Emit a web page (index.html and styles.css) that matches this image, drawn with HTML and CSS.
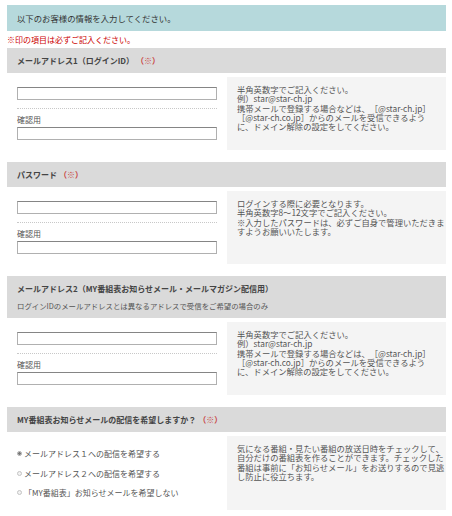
FILE: index.html
```html
<!DOCTYPE html>
<html lang="ja">
<head>
<meta charset="utf-8">
<title>お客様情報入力</title>
<link rel="stylesheet" href="styles.css">
</head>
<body>
<div class="page">
  <div class="lead">以下のお客様の情報を入力してください。</div>
  <div class="note">※印の項目は必ずご記入ください。</div>

  <section class="section">
    <div class="sec-head">メールアドレス1（ログインID）<span class="req">（※）</span></div>
    <div class="row">
      <div class="fields">
        <input class="text-input" type="text">
        <div class="field-sep"></div>
        <span class="confirm-label">確認用</span>
        <input class="text-input" type="text">
      </div>
      <div class="hint">
        <span class="ln">半角英数字でご記入ください。</span>
        <span class="ln">例）star@star-ch.jp</span>
        <span class="ln">携帯メールで登録する場合などは、［@star-ch.jp］</span>
        <span class="ln">［@star-ch.co.jp］からのメールを受信できるよう</span>
        <span class="ln">に、ドメイン解除の設定をしてください。</span>
      </div>
    </div>
  </section>

  <section class="section">
    <div class="sec-head">パスワード<span class="req">（※）</span></div>
    <div class="row">
      <div class="fields">
        <input class="text-input" type="password">
        <div class="field-sep"></div>
        <span class="confirm-label">確認用</span>
        <input class="text-input" type="password">
      </div>
      <div class="hint">
        <span class="ln">ログインする際に必要となります。</span>
        <span class="ln">半角英数字8～12文字でご記入ください。</span>
        <span class="ln">※入力したパスワードは、必ずご自身で管理いただきま</span>
        <span class="ln">すようお願いいたします。</span>
      </div>
    </div>
  </section>

  <section class="section">
    <div class="sec-head">メールアドレス2（MY番組表お知らせメール・メールマガジン配信用）
      <div class="sec-sub">ログインIDのメールアドレスとは異なるアドレスで受信をご希望の場合のみ</div>
    </div>
    <div class="row">
      <div class="fields">
        <input class="text-input" type="text">
        <div class="field-sep"></div>
        <span class="confirm-label">確認用</span>
        <input class="text-input" type="text">
      </div>
      <div class="hint">
        <span class="ln">半角英数字でご記入ください。</span>
        <span class="ln">例）star@star-ch.jp</span>
        <span class="ln">携帯メールで登録する場合などは、［@star-ch.jp］</span>
        <span class="ln">［@star-ch.co.jp］からのメールを受信できるよう</span>
        <span class="ln">に、ドメイン解除の設定をしてください。</span>
      </div>
    </div>
  </section>

  <section class="section">
    <div class="sec-head">MY番組表お知らせメールの配信を希望しますか？<span class="req">（※）</span></div>
    <div class="row">
      <div class="fields radios">
        <label class="radio-row"><input class="radio" type="radio" name="mail" checked>メールアドレス１への配信を希望する</label>
        <label class="radio-row"><input class="radio" type="radio" name="mail">メールアドレス２への配信を希望する</label>
        <label class="radio-row"><input class="radio" type="radio" name="mail">「MY番組表」お知らせメールを希望しない</label>
      </div>
      <div class="hint">
        <span class="ln">気になる番組・見たい番組の放送日時をチェックして、</span>
        <span class="ln">自分だけの番組表を作ることができます。チェックした</span>
        <span class="ln">番組は事前に「お知らせメール」をお送りするので見逃</span>
        <span class="ln">し防止に役立ちます。</span>
      </div>
    </div>
  </section>
</div>
</body>
</html>
```

FILE: styles.css
```css
html, body {
  margin: 0;
  padding: 0;
  background: #fff;
}

body {
  font-family: "Noto Sans CJK JP", "Noto Sans", sans-serif;
  color: #444;
  font-size: 8px;
  text-spacing-trim: space-all;
}

.page {
  padding: 5px 6px 0 7px;
}

.lead {
  background: #b6d9dc;
  height: 26px;
  line-height: 26px;
  padding-left: 10px;
  font-size: 8.4px;
  color: #333;
}

.note {
  height: 17px;
  line-height: 17px;
  color: #c00;
  font-size: 8px;
}

.section {
  margin-bottom: 12px;
}

.sec-head {
  background: #dadada;
  padding: 5px 10px;
  font-weight: bold;
  font-size: 8px;
  line-height: 15px;
  color: #444;
}

.req {
  color: #c9423f;
  margin-left: 2px;
}

.sec-sub {
  font-weight: normal;
  font-size: 7.4px;
  margin-top: 2px;
  line-height: 15px;
  color: #555;
}

.row {
  display: flex;
  align-items: stretch;
}

.fields {
  width: 220px;
  flex: none;
  box-sizing: border-box;
  padding: 14px 10px 10px;
}

.text-input {
  display: block;
  width: 200px;
  height: 13px;
  margin: 0;
  padding: 0;
  box-sizing: border-box;
  border: 1px solid #b0b0b0;
  border-top-color: #858585;
  background: #fff;
}

.field-sep {
  height: 0;
  margin-top: 8px;
  border-top: 1px dotted #c8c8c8;
}

.confirm-label {
  display: block;
  margin: 5px 0 1px;
  line-height: 12px;
  font-size: 8px;
  color: #555;
}

.hint {
  flex: 1;
  margin-top: 4px;
  padding: 8px 0 8px 10px;
  background: #f4f4f4;
  font-size: 8.3px;
  line-height: 9.3px;
  color: #555;
  white-space: nowrap;
  overflow: hidden;
}

.ln {
  display: block;
  height: 9.3px;
}

.radios {
  padding: 12px 10px 7px;
}

.radio-row {
  display: flex;
  align-items: center;
  height: 19.5px;
  font-size: 8px;
  color: #555;
}

.radio {
  appearance: none;
  -webkit-appearance: none;
  width: 5px;
  height: 5px;
  margin: 0 2px 0 0;
  border: 1px solid #c4c4c4;
  border-radius: 50%;
  box-sizing: border-box;
  background: #f2f2f2;
}

.radio:checked {
  background: radial-gradient(circle, #777 0 1.2px, #eaeaea 1.6px);
  border-color: #a8a8a8;
}
```
